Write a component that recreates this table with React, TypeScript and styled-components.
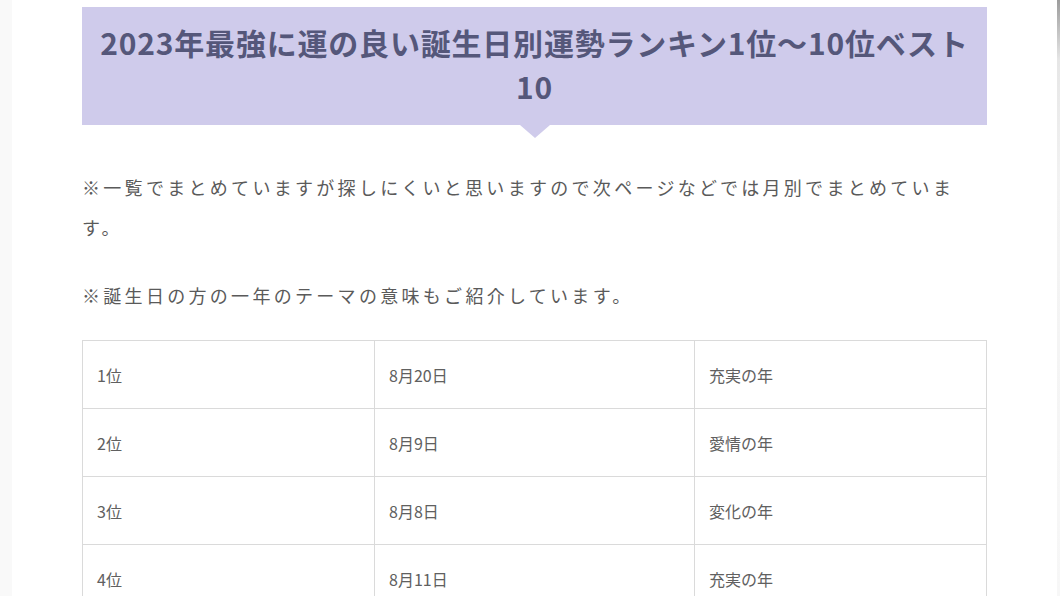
import styled, { createGlobalStyle } from 'styled-components';

const GlobalStyle = createGlobalStyle`
    html, body {
        margin: 0;
        padding: 0;
        background: #f9f9f9;
    }
    body {
        font-family: "Noto Sans CJK JP", "Noto Sans", sans-serif;
    }
`;

const rows = [
    { rank: '1位', date: '8月20日', theme: '充実の年' },
    { rank: '2位', date: '8月9日', theme: '愛情の年' },
    { rank: '3位', date: '8月8日', theme: '変化の年' },
    { rank: '4位', date: '8月11日', theme: '充実の年' },
];

const App = () => {
    return (
        <>
            <GlobalStyle />
            <Page>
                <Gutter />
                <Main>
                    <Heading>2023年最強に運の良い誕生日別運勢ランキン1位～10位ベスト10</Heading>
                    <Paragraph>
                        ※一覧でまとめていますが探しにくいと思いますので次ページなどでは月別でまとめています。
                    </Paragraph>
                    <Paragraph>※誕生日の方の一年のテーマの意味もご紹介しています。</Paragraph>
                    <Table>
                        <colgroup>
                            <col style={{ width: 292 }} />
                            <col style={{ width: 320 }} />
                            <col style={{ width: 292 }} />
                        </colgroup>
                        <tbody>
                            {rows.map((row) => (
                                <tr key={row.rank}>
                                    <Cell>{row.rank}</Cell>
                                    <Cell>{row.date}</Cell>
                                    <Cell>{row.theme}</Cell>
                                </tr>
                            ))}
                        </tbody>
                    </Table>
                </Main>
                <ScrollShade />
            </Page>
        </>
    );
};

const Page = styled.div`
    display: flex;
    height: 596px;
    overflow: hidden;
`;

const Gutter = styled.div`
    width: 12px;
    flex-shrink: 0;
    background: #f9f9f9;
`;

const Main = styled.div`
    flex: 1;
    background: #ffffff;
    padding: 7px 70px 0;
`;

const ScrollShade = styled.div`
    width: 4px;
    flex-shrink: 0;
    background: linear-gradient(to bottom, #9c9c9c 0px, #e6e6e6 60px, #f2f2f2 180px, #f7f7f7 100%);
`;

const Heading = styled.h2`
    position: relative;
    margin: 0 0 42px;
    padding: 13px 10px 17px;
    background: #cfcbeb;
    color: #55577a;
    font-size: 30px;
    font-weight: 700;
    line-height: 44px;
    letter-spacing: 0.8px;
    text-align: center;

    &::after {
        content: '';
        position: absolute;
        left: 50%;
        bottom: -13px;
        margin-left: -15px;
        border-left: 15px solid transparent;
        border-right: 15px solid transparent;
        border-top: 13px solid #cfcbeb;
    }
`;

const Paragraph = styled.p`
    margin: 0 0 28px;
    color: #5a5a5a;
    font-size: 18px;
    line-height: 40px;
    letter-spacing: 3.3px;
`;

const Table = styled.table`
    width: 904px;
    margin-top: -3px;
    border-collapse: collapse;
    table-layout: fixed;
`;

const Cell = styled.td`
    height: 67px;
    padding: 0 14px;
    border: 1px solid #dadada;
    color: #606060;
    font-size: 16px;
    vertical-align: middle;
`;

export default App;
